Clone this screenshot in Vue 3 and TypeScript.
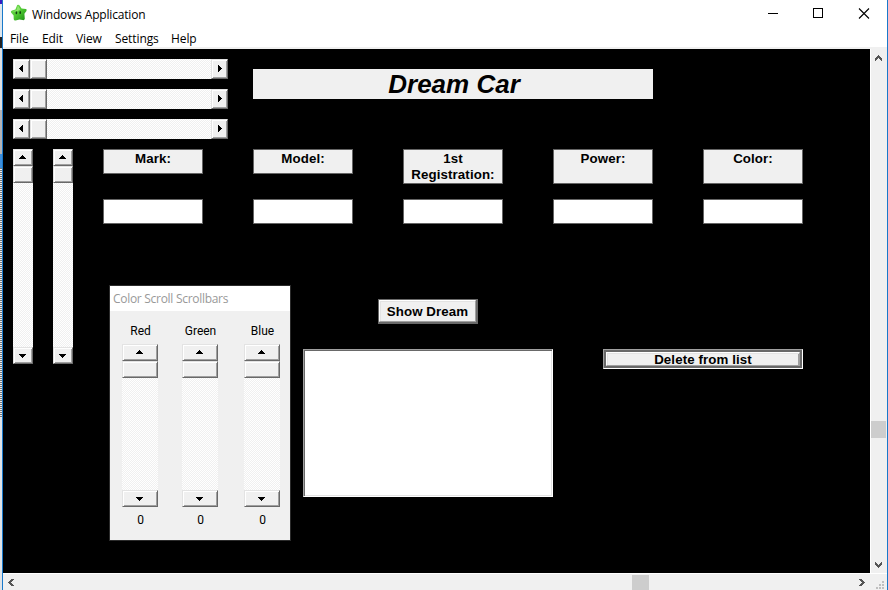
<script setup lang="ts">
const menus: string[] = ['File', 'Edit', 'View', 'Settings', 'Help']

interface Field { label: string; tall: boolean }
const fields: Field[] = [
  { label: 'Mark:', tall: false },
  { label: 'Model:', tall: false },
  { label: '1st Registration:', tall: true },
  { label: 'Power:', tall: true },
  { label: 'Color:', tall: true },
]

interface Channel { name: string; value: number }
const channels: Channel[] = [
  { name: 'Red', value: 0 },
  { name: 'Green', value: 0 },
  { name: 'Blue', value: 0 },
]
</script>

<template>
  <div class="screen">
    <div class="behind">
      <i class="b1"></i><i class="b2"></i><i class="b3"></i><i class="b4"></i><i class="b5"></i><i class="b6"></i><i class="b7"></i>
    </div>
    <div class="window">
      <header class="titlebar">
        <svg class="star" width="18" height="18" viewBox="0 0 18 18">
          <defs>
            <linearGradient id="g" x1="0" y1="0" x2="1" y2="1">
              <stop offset="0" stop-color="#7be05a" /><stop offset="0.5" stop-color="#4fc832" /><stop offset="1" stop-color="#178a12" />
            </linearGradient>
          </defs>
          <path d="M7.2 1Q8.6 .2 9.6 1.4L11.6 4.6L16 5Q17.2 5.6 16.4 7L14.4 9.8L14.8 14.7Q14.4 16.6 12.6 16L9.4 15.4L5.6 16.600Q3.600 16.600 3.700 14.900L3.600 11.6L1 8.6Q.4 7 2 6.4L5.4 5.4Z" fill="url(#g)" />
          <path d="M8 1.6L6.600 6L2.600 7.4L7 7.600L10.400 5.6Z" fill="#b4f590" opacity=".6" />
          <ellipse cx="6.4" cy="8.800" rx=".8" ry="1.5" fill="#123b10" />
          <ellipse cx="10.2" cy="8.400" rx=".8" ry="1.500" fill="#123b10" />
        </svg>
        <span class="caption">Windows Application</span>
        <svg class="controls" width="102" height="12" viewBox="0 0 102 12" fill="none" stroke="#000" shape-rendering="crispEdges">
          <path d="M0 5.5H10" />
          <rect x="45.5" y=".5" width="9" height="9" />
          <path d="M91 .5L101 10.500M101 .5L91 10.500" shape-rendering="auto" stroke-width="1.1" />
        </svg>
      </header>
      <nav class="menu"><span v-for="m in menus" :key="m" :class="m.toLowerCase()">{{ m }}</span></nav>

      <div class="body">
        <main class="client">
          <div class="top">
            <div class="hbars">
              <div v-for="n in 3" :key="n" class="bar horizontal">
                <div class="knob"><svg width="4" height="7" shape-rendering="crispEdges"><path d="M3 0h1v7H3V6H2V5H1V4H0V3H1V2H2V1H3z" /></svg></div>
                <div class="knob"></div>
                <div class="track"></div>
                <div class="knob right"><svg width="4" height="7" shape-rendering="crispEdges"><path d="M0 0h1v1h1v1h1v1h1v1H3v1H2v1H1v1H0z" /></svg></div>
              </div>
            </div>
            <h1>Dream Car</h1>
          </div>

          <div class="lower">
            <div class="vbars">
              <div v-for="n in 2" :key="n" class="bar vertical">
                <div class="knob up"><svg width="7" height="4" shape-rendering="crispEdges"><path d="M3 0h1v1h1v1h1v1h1v1H0V3h1V2h1V1h1z" /></svg></div>
                <div class="knob"></div>
                <div class="track"></div>
                <div class="knob"><svg width="7" height="4" shape-rendering="crispEdges"><path d="M0 0h7v1H6v1H5v1H4v1H3V3H2V2H1V1H0z" /></svg></div>
              </div>
            </div>

            <div class="form">
              <div class="fields">
                <div v-for="f in fields" :key="f.label" class="field">
                  <div class="labelslot"><label :class="{ tall: f.tall }">{{ f.label }}</label></div>
                  <div class="input"></div>
                </div>
              </div>

              <div class="row">
                <section class="palette">
                  <div class="palette-title">Color Scroll Scrollbars</div>
                  <div class="channels">
                    <div v-for="c in channels" :key="c.name" class="channel">
                      <span class="name">{{ c.name }}</span>
                      <div class="bar vertical">
                        <div class="knob up"><svg width="7" height="4" shape-rendering="crispEdges"><path d="M3 0h1v1h1v1h1v1h1v1H0V3h1V2h1V1h1z" /></svg></div>
                        <div class="knob"></div>
                        <div class="track"></div>
                        <div class="knob"><svg width="7" height="4" shape-rendering="crispEdges"><path d="M0 0h7v1H6v1H5v1H4v1H3V3H2V2H1V1H0z" /></svg></div>
                      </div>
                      <span class="value">{{ c.value }}</span>
                    </div>
                  </div>
                </section>
                <div class="center">
                  <div class="show"><div class="face">Show Dream</div></div>
                  <div class="list"></div>
                </div>
                <div class="delete"><div class="ring"><div class="face">Delete from list</div></div></div>
              </div>
            </div>
          </div>
        </main>

        <aside class="vscroll">
          <svg width="7" height="6" shape-rendering="crispEdges"><path d="M3 0h1v1h1v1h1v1h1v3H6V5H5V4H4V3H3v1H2v1H1v1H0V3h1V2h1V1h1z" /></svg>
          <div class="thumb"></div>
          <svg width="7" height="6" shape-rendering="crispEdges"><path d="M0 0h1v1h1v1h1v1h1V2h1V1h1V0h1v3H6v1H5v1H4v1H3V5H2V4H1V3H0z" /></svg>
        </aside>
      </div>
      <footer class="hscroll">
        <svg width="6" height="7" shape-rendering="crispEdges"><path d="M6 0v1H5v1H4v1H3v1h1v1h1v1h1v1H3V6H2V5H1V4H0V3h1V2h1V1h1V0z" /></svg>
        <div class="thumb"></div>
        <svg width="6" height="7" shape-rendering="crispEdges"><path d="M0 0h3v1h1v1h1v1h1v1H5v1H4v1H3v1H0V6h1V5h1V4h1V3H2V2H1V1H0z" /></svg>
        <svg class="grip" width="8" height="8" shape-rendering="crispEdges"><path d="M6 0h2v2H6zM3 3h2v2H3zM6 3h2v2H6zM0 6h2v2H0zM3 6h2v2H3zM6 6h2v2H6z" /></svg>
      </footer>
    </div>
  </div>
</template>

<style>
body { margin: 0; overflow: hidden; }
</style>

<style scoped>
* { box-sizing: border-box; }
svg { display: block; flex: none; }
.screen { display: flex; width: 888px; height: 590px; overflow: hidden; background: #fff; }
.behind { width: 2px; display: flex; flex-direction: column; background: #dfe3e8; }
.behind i { display: block; flex: none; }
.b1 { height: 4px; background: #3a1ac0; }
.b2 { height: 33px; background: #dde6ee; }
.b3 { height: 11px; background: #222; }
.b4 { height: 62px; background: #dfe0e2; }
.b5 { height: 44px; background: #b4b4b6; }
.b6 { height: 14px; background: #3d8fdd; }
.b7 { height: 250px; background: repeating-linear-gradient(#777 0 1px, #eee 1px 2px); }
.window { width: 886px; display: flex; flex-direction: column; border: solid #1979ca; border-width: 0 1px; background: #fff; }
.titlebar { display: flex; height: 28px; padding: 5px 17px 0 7px; font: 12px/17px "Open Sans", sans-serif; }
.star { margin-top: -1px; }
.caption { margin-left: 4px; padding-top: 1px; white-space: nowrap; letter-spacing: -.18px; }
.controls { margin: 3px 0 0 auto; }
.menu { display: flex; height: 21px; border-bottom: 2px solid #f0f0f0; font: 12px/22px "Open Sans", sans-serif; padding-left: 7px; }
.menu span { white-space: nowrap; letter-spacing: -.1px; }
.file { width: 32px; } .edit { width: 34px; } .view { width: 39px; } .settings { width: 56px; }
.body { display: flex; height: 524px; }
.client { width: 867px; padding: 10px; background: #000; }
.top { display: flex; height: 90px; }
.hbars { display: flex; flex-direction: column; gap: 10px; }
.bar { display: flex; }
.horizontal { width: 215px; height: 20px; }
.vertical { flex-direction: column; width: 20px; height: 215px; }
.track { flex: 1; background: repeating-conic-gradient(#f0f0f0 0 25%, #fff 0 50%) 0 0 / 2px 2px; }
.knob { flex: 0 0 17px; display: flex; align-items: center; justify-content: center; background: #f0f0f0; border: 1px solid; border-color: #e3e3e3 #696969 #696969 #e3e3e3; box-shadow: inset 1px 1px #fff, inset -1px -1px #a0a0a0; }
.horizontal .knob svg { margin: 0 2px 1px 0; }
.horizontal .right svg { margin-right: 0; }
.vertical .knob svg { margin: 0 1px 0 0; }
.vertical .up svg { margin-bottom: 2px; }
h1 { margin: 10px 0 0 25px; width: 400px; height: 30px; background: #f0f0f0; font: italic bold 26px/30px "Liberation Sans", Arial, sans-serif; text-align: center; padding-left: 2px; }
.lower { display: flex; }
.vbars { display: flex; gap: 20px; width: 90px; }
.fields { display: flex; gap: 50px; }
.field { width: 100px; }
.labelslot { height: 50px; }
label { display: block; height: 25px; padding-top: 1px; border: 1px solid #646464; background: #f0f0f0; text-align: center; font: bold 13.3px/16px "Liberation Sans", Arial, sans-serif; }
label.tall { height: 35px; }
label, .face { letter-spacing: .1px; }
.input { height: 25px; border: 1px solid #646464; background: #fff; }
.row { display: flex; align-items: flex-start; margin-top: 61px; }
.palette { margin-left: 6px; width: 182px; height: 256px; border: 1px solid #2b2b2b; background: #f0f0f0; }
.palette-title { height: 25px; padding-left: 3px; background: #fff; color: #999; font: 12px/25px "Open Sans", sans-serif; letter-spacing: -.29px; white-space: nowrap; }
.channels { display: flex; padding-left: 12px; }
.channel { width: 36px; margin-right: 24px; display: flex; flex-direction: column; align-items: center; font: 12px/16px Roboto, sans-serif; }
.channel:nth-child(2) { margin-right: 26px; }
.channel .bar { width: 36px; height: 163px; }
.name { height: 33px; padding: 12px 0 0 1px; }
.value { padding: 5px 0 0 1px; }
.center { margin: 14px 0 0 12px; width: 250px; }
.show { width: 100px; height: 25px; margin: 0 auto 25px; border: 1px solid #696969; border-width: 1px 2px 2px 1px; }
.face { background: #f0f0f0; border: 1px solid; border-color: #fff #a0a0a0 #a0a0a0 #fff; text-align: center; font: bold 13.3px/22px "Liberation Sans", Arial, sans-serif; white-space: nowrap; }
.show .face { height: 22px; box-shadow: inset 1px 1px #e3e3e3; }
.list { height: 148px; border: 1px solid; border-color: #a0a0a0 #fff #fff #a0a0a0; background: #fff; box-shadow: inset 1px 1px #696969, inset -1px -1px #e3e3e3; }
.delete { margin: 64px 0 0 50px; width: 200px; height: 20px; border: 1px solid; border-color: #a0a0a0 #fff #fff #a0a0a0; }
.ring { height: 18px; border: 2px solid #696969; }
.ring .face { height: 14px; line-height: 14px; overflow: hidden; box-shadow: inset 1px 1px #e3e3e3, inset -1px 0 #a0a0a0; }
.vscroll { width: 17px; display: flex; flex-direction: column; align-items: center; border-left: 1px solid #fff; background: #f0f0f0; padding: 6px 1px 5px 0; fill: #555; }
.vscroll .thumb { margin: 360px 0 auto; width: 15px; height: 17px; background: #cdcdcd; }
.hscroll { display: flex; align-items: center; height: 17px; border-top: 1px solid #fff; background: #f0f0f0; padding: 0 3px 0 5px; fill: #555; }
.hscroll .thumb { width: 17px; height: 15px; margin: 1px auto 0 618px; background: #cdcdcd; }
.grip { margin: 5px 0 0 11px; fill: #bfbfbf; }
</style>
